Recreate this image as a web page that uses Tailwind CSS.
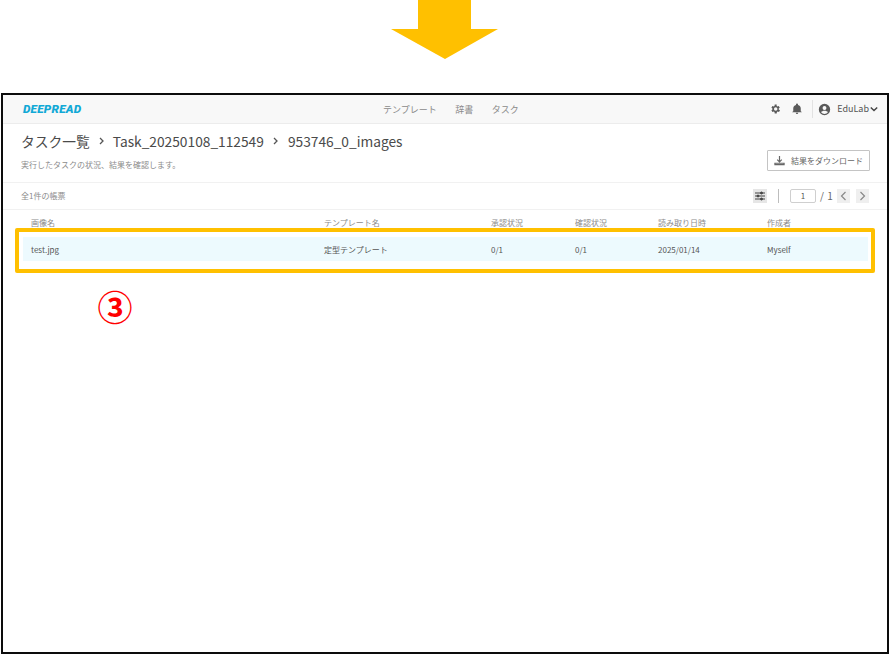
<!DOCTYPE html>
<html lang="ja">

<head>
    <meta charset="UTF-8" />
    <meta name="viewport" content="width=device-width, initial-scale=1.0" />
    <title>DeepRead</title>
    <script src="https://cdn.jsdelivr.net/npm/@tailwindcss/browser@4"></script>
</head>

<body class="bg-white relative h-[654px] w-[890px] overflow-hidden font-['Noto_Sans_CJK_JP','Noto_Sans',sans-serif]">
    <!-- arrow -->
    <svg class="block" width="890" height="93" viewBox="0 0 890 93">
        <polygon points="418,0 471,0 471,29 498,29 445,59 391,29 418,29" fill="#ffc000" />
    </svg>

    <!-- app window -->
    <div class="ml-[1px] w-[888px] h-[561px] border-2 border-[#0c0c0c] flex flex-col text-[#4a4a4a]">
        <!-- navbar -->
        <header class="h-[29px] shrink-0 bg-[#f8f8f8] border-b border-[#ececec] flex items-center pl-[20px] pr-[9px] relative">
            <span class="w-[60px] mt-[1px] text-[11.800px] font-black italic text-[#12a9d6] font-['Roboto',sans-serif] tracking-[0.2px]">DEEPREAD</span>
            <nav class="ml-[300px] mt-[1px] flex gap-[18.500px] text-[9px] text-[#8a8a8a]">
                <span>テンプレート</span>
                <span>辞書</span>
                <span>タスク</span>
            </nav>
            <div class="ml-auto flex items-center text-[#555]">
                <svg class="w-[12px] h-[12px]" viewBox="0 0 24 24" fill="#5a5a5a">
                    <path d="M19.4 13a7.5 7.5 0 0 0 0-2l2.1-1.6-2-3.5-2.5 1a7.6 7.6 0 0 0-1.7-1L15.400 3.200h-4L11 5.900a7.600 7.600 0 0 0-1.700 1l-2.500-1-2 3.500L6.900 11a7.500 7.500 0 0 0 0 2l-2.100 1.600 2 3.500 2.500-1a7.600 7.600 0 0 0 1.700 1l.4 2.700h4l.4-2.700a7.600 7.600 0 0 0 1.700-1l2.500 1 2-3.500zM13.400 15.500a3.500 3.500 0 1 1 0-7 3.500 3.500 0 0 1 0 7z" />
                </svg>
                <svg class="w-[12px] h-[12px] ml-[10px]" viewBox="0 0 24 24" fill="#5a5a5a">
                    <path d="M12 22a2.500 2.500 0 0 0 2.500-2.500h-5A2.500 2.500 0 0 0 12 22zm7.500-5.500V11c0-3.500-2-6.300-5.500-7.100V3a2 2 0 0 0-4 0v.9C6.500 4.700 4.500 7.500 4.500 11v5.500L2.500 18v.5h19V18z" />
                </svg>
                <span class="w-px h-[18px] bg-[#e2e2e2] ml-[9px]"></span>
                <svg class="w-[13px] h-[13px] ml-[5px]" viewBox="0 0 24 24" fill="#5a5a5a">
                    <path d="M12 1.500a10.500 10.500 0 1 0 0 21 10.500 10.500 0 0 0 0-21zm0 4a3.600 3.600 0 1 1 0 7.200 3.600 3.600 0 0 1 0-7.200zm0 14.700a8.200 8.200 0 0 1-6.300-3c.9-1.700 3.800-2.700 6.300-2.700s5.400 1 6.300 2.700a8.200 8.200 0 0 1-6.300 3z" />
                </svg>
                <span class="ml-[6px] text-[9px]">EduLab</span>
                <svg class="w-[8px] h-[8px] ml-[1px]" viewBox="0 0 10 10" fill="none" stroke="#444" stroke-width="1.800">
                    <path d="M1 3l4 4 4-4" />
                </svg>
            </div>
        </header>

        <!-- page title -->
        <section class="h-[59px] shrink-0 border-b border-[#f1f1f1] pl-[18px] pr-[17px] flex justify-between">
            <div>
                <h1 class="mt-[6px] flex items-center h-[22px] text-[13.750px] text-[#4a4a4a]">
                    <span>タスク一覧</span>
                    <svg class="w-[7px] h-[8px] mx-[8px]" viewBox="0 0 7 8" fill="none" stroke="#555" stroke-width="1.300"><path d="M2 1l3 3-3 3" /></svg>
                    <span>Task_20250108_112549</span>
                    <svg class="w-[7px] h-[8px] ml-[8px] mr-[9px]" viewBox="0 0 7 8" fill="none" stroke="#555" stroke-width="1.300"><path d="M2 1l3 3-3 3" /></svg>
                    <span>953746_0_images</span>
                </h1>
                <p class="mt-[6px] text-[8px] leading-[14px] text-[#8c8c8c]">実行したタスクの状況、結果を確認します。</p>
            </div>
            <button class="mt-[26px] w-[103px] h-[21px] border border-[#c4c4c4] rounded-[1px] flex items-center justify-center gap-[6px] text-[8px] text-[#666]">
                <svg class="w-[11px] h-[11px]" viewBox="0 0 12 12" fill="none" stroke="#666" stroke-width="1.300">
                    <path d="M6 1v6M3.500 5L6 7.500 8.500 5M1 9h10v1.500H1z" />
                </svg>
                結果をダウンロード
            </button>
        </section>

        <!-- toolbar -->
        <section class="h-[27px] shrink-0 border-b border-[#f1f1f1] pl-[18px] pr-[18px] pb-[1px] flex items-center">
            <span class="text-[8px] text-[#8c8c8c]">全1件の帳票</span>
            <div class="ml-auto flex items-center">
                <span class="w-[14px] h-[14px] bg-[#e6e6e6] flex items-center justify-center">
                    <svg class="w-[10px] h-[10px]" viewBox="0 0 10 10" stroke="#444" stroke-width="1" fill="#444">
                        <path d="M0 2h10M0 5h10M0 8h10" />
                        <circle cx="6.500" cy="2" r="1" /><circle cx="3" cy="5" r="1" /><circle cx="6.500" cy="8" r="1" />
                    </svg>
                </span>
                <span class="w-px h-[14px] bg-[#bdbdbd] ml-[11px]"></span>
                <span class="w-[26px] h-[14px] ml-[11px] border border-[#cfcfcf] rounded-[2px] flex items-center justify-center text-[8px] leading-none text-[#555]">1</span>
                <span class="ml-[4px] w-[15px] text-[10px] tracking-[0.5px] text-[#666]">/ 1</span>
                <span class="w-[13px] h-[14px] ml-[2px] bg-[#efefef] flex items-center justify-center">
                    <svg class="w-[7px] h-[10px]" viewBox="0 0 7 10" fill="none" stroke="#888" stroke-width="1.200"><path d="M5.500 1L1.500 5l4 4" /></svg>
                </span>
                <span class="w-[13px] h-[14px] ml-[6px] bg-[#efefef] flex items-center justify-center">
                    <svg class="w-[7px] h-[10px]" viewBox="0 0 7 10" fill="none" stroke="#888" stroke-width="1.200"><path d="M1.500 1l4 4-4 4" /></svg>
                </span>
            </div>
        </section>

        <!-- table -->
        <div class="pl-[20px] pr-[19px] text-[8px]">
            <div class="grid grid-cols-[293px_167px_84px_83px_109px_1fr] h-[27px] items-center pl-[8px] pb-[1px] text-[#8c8c8c]">
                <span>画像名</span>
                <span>テンプレート名</span>
                <span>承認状況</span>
                <span>確認状況</span>
                <span>読み取り日時</span>
                <span>作成者</span>
            </div>
            <div class="grid grid-cols-[293px_167px_84px_83px_109px_1fr] h-[24px] items-center pl-[8px] pt-[1px] bg-[#edfafe] text-[#555]">
                <span>test.jpg</span>
                <span>定型テンプレート</span>
                <span>0/1</span>
                <span>0/1</span>
                <span>2025/01/14</span>
                <span>Myself</span>
            </div>
        </div>
    </div>

    <!-- callout over the row -->
    <div class="absolute left-[15px] top-[228px] w-[860px] h-[45px] border-[4px] border-[#ffc000] rounded-[2px]"></div>
    <span class="absolute left-[97px] top-[284px] w-[36px] text-center text-[35px] leading-[44px] font-bold text-[#ff0000] font-['Noto_Sans_CJK_JP',sans-serif]">③</span>
</body>

</html>
